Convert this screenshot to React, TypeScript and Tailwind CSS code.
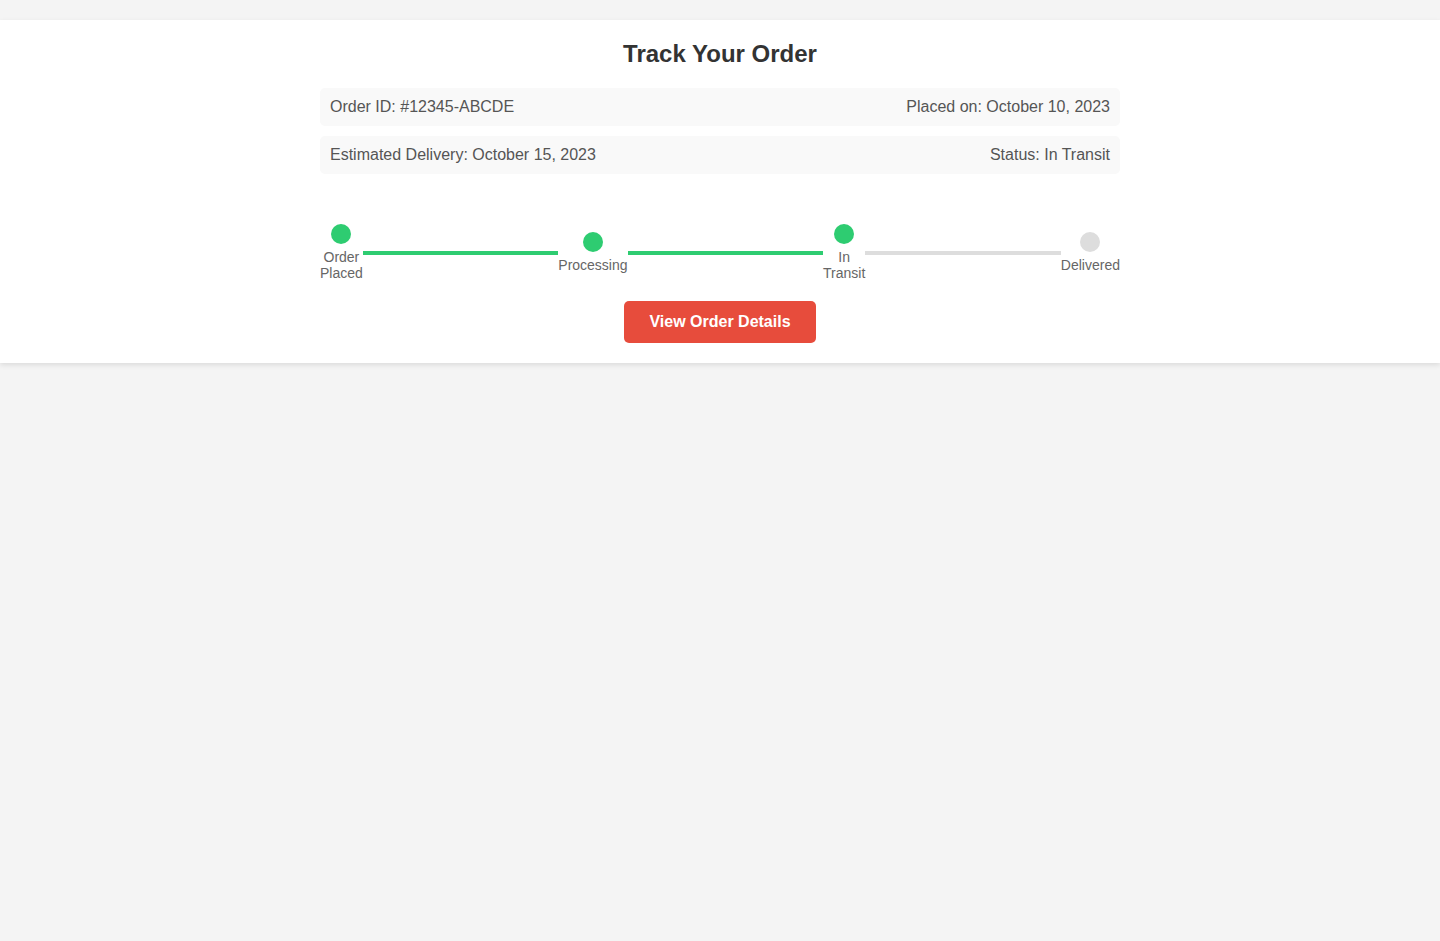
const steps = [
  { label: 'Order Placed', done: true },
  { label: 'Processing', done: true },
  { label: 'In Transit', done: true },
  { label: 'Delivered', done: false },
];

function Step({ label, done }: { label: string; done: boolean }) {
  return (
    <div className="flex flex-col items-center text-center">
      <div className={`h-5 w-5 rounded-full ${done ? 'bg-[#2ecc71]' : 'bg-[#ddd]'}`} />
      <div className="mt-[5px] text-[14px] leading-[16px] text-[#666]">{label}</div>
    </div>
  );
}

export default function App() {
  return (
    <div className="min-h-[941px] bg-[#f4f4f4] pt-5 font-['Liberation_Sans',Arial,sans-serif]">
      <div className="bg-white p-5 shadow-[0_2px_5px_rgba(0,0,0,0.1)]">
        <div className="mx-auto max-w-[800px]">
          <h1 className="mb-5 text-center text-[24px] leading-[28px] font-bold text-[#333]">Track Your Order</h1>

          <div className="mb-[10px] flex justify-between rounded-[5px] bg-[#f9f9f9] px-[10px] py-[10px] text-[16px] leading-[18px] text-[#555]">
            <span>Order ID: #12345-ABCDE</span>
            <span>Placed on: October 10, 2023</span>
          </div>
          <div className="flex justify-between rounded-[5px] bg-[#f9f9f9] px-[10px] py-[10px] text-[16px] leading-[18px] text-[#555]">
            <span>Estimated Delivery: October 15, 2023</span>
            <span>Status: In Transit</span>
          </div>

          <div className="mb-5 mt-[50px] flex items-center">
            {steps.map((step, i) => (
              <div key={step.label} className="contents">
                <Step label={step.label} done={step.done} />
                {i < steps.length - 1 && (
                  <div className={`h-1 w-full ${steps[i + 1].done ? 'bg-[#2ecc71]' : 'bg-[#ddd]'}`} />
                )}
              </div>
            ))}
          </div>

          <div className="text-center">
            <button className="rounded-[5px] bg-[#e74c3c] px-[25px] py-3 text-[16px] leading-[18px] font-bold text-white">
              View Order Details
            </button>
          </div>
        </div>
      </div>
    </div>
  );
}
